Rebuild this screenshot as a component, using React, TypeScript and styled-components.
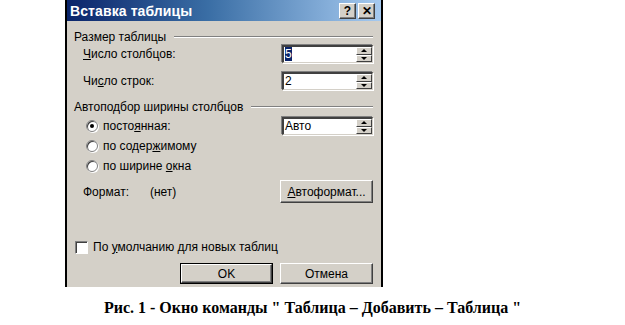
import React from "react";
import styled, { createGlobalStyle } from "styled-components";

const GlobalStyle = createGlobalStyle`
  html, body {
    margin: 0;
    padding: 0;
    background: #fff;
  }
  body {
    width: 625px;
    height: 325px;
    overflow: hidden;
  }
`;

const UI_FONT = `"Liberation Sans", Arial, sans-serif`;

const Page = styled.div`
  display: flex;
  flex-direction: column;
  width: 625px;
  height: 325px;
`;

const Dialog = styled.div`
  flex-shrink: 0;
  margin-left: 65px;
  width: 314px;
  height: 287px;
  background: #d4d0c8;
  border-left: 2px solid #000;
  border-right: 2px solid #000;
  display: flex;
  flex-direction: column;
  font-family: ${UI_FONT};
  font-size: 12px;
  color: #000;
`;

const TitleBar = styled.div`
  flex-shrink: 0;
  height: 21px;
  display: flex;
  align-items: center;
  padding: 0 6px 0 3px;
  background: linear-gradient(to right, #0a246a 0%, #3a6ea5 45%, #a6caf0 100%);
`;

const Title = styled.div`
  flex: 1;
  color: #fff;
  font-weight: bold;
  font-size: 14px;
  letter-spacing: 0.1px;
`;

const CaptionButton = styled.div`
  width: 15px;
  height: 14px;
  background: #d4d0c8;
  border-top: 1px solid #fff;
  border-left: 1px solid #fff;
  border-right: 1px solid #404040;
  border-bottom: 1px solid #404040;
  box-shadow: inset -1px -1px 0 #808080;
  display: flex;
  align-items: center;
  justify-content: center;
  font-weight: bold;
  font-size: 12px;
  line-height: 1;
  margin-left: 2px;
`;

const Body = styled.div`
  flex: 1;
  display: flex;
  flex-direction: column;
  padding: 9px 8px 0 7px;
  & > * {
    flex-shrink: 0;
  }
`;

const GroupHeader = styled.div<{ $top?: number }>`
  display: flex;
  align-items: center;
  gap: 8px;
  height: 14px;
  margin-top: ${(p) => p.$top ?? 0}px;
  &::after {
    content: "";
    flex: 1;
    height: 0;
    border-top: 1px solid #808080;
    border-bottom: 1px solid #fff;
  }
`;

const FieldRow = styled.div<{ $top: number }>`
  display: flex;
  align-items: center;
  justify-content: space-between;
  height: 18px;
  margin-top: ${(p) => p.$top}px;
`;

const Label = styled.div<{ $indent?: number }>`
  display: flex;
  align-items: center;
  padding-left: ${(p) => p.$indent ?? 9}px;
  white-space: nowrap;
`;

const Spin = styled.div`
  width: 88px;
  height: 15px;
  background: #fff;
  border-top: 2px solid #404040;
  border-left: 2px solid #404040;
  border-right: 1px solid #d4d0c8;
  border-bottom: 1px solid #d4d0c8;
  box-shadow: 1px 1px 0 #fff, -1px -1px 0 #808080;
  display: flex;
  align-items: center;
`;

const SpinValue = styled.div`
  flex: 1;
  padding-left: 1px;
  line-height: 15px;
`;

const Selected = styled.span`
  background: #0a246a;
  color: #fff;
`;

const SpinButtons = styled.div`
  width: 16px;
  height: 15px;
  display: flex;
  flex-direction: column;
`;

const SpinBtn = styled.div`
  flex: 1;
  background: #d4d0c8;
  border-top: 1px solid #fff;
  border-left: 1px solid #fff;
  border-right: 1px solid #404040;
  border-bottom: 1px solid #404040;
  display: flex;
  align-items: center;
  justify-content: center;
`;

const Arrow = styled.div<{ $up?: boolean }>`
  width: 0;
  height: 0;
  border-left: 3px solid transparent;
  border-right: 3px solid transparent;
  ${(p) =>
    p.$up ? "border-bottom: 3px solid #000;" : "border-top: 3px solid #000;"}
`;

const Radio = styled.div<{ $checked?: boolean }>`
  width: 10px;
  height: 10px;
  border-radius: 50%;
  background: #fff;
  border: 1px solid #808080;
  box-shadow: inset 1px 1px 0 #404040, 1px 1px 0 #fff;
  display: flex;
  align-items: center;
  justify-content: center;
  margin-right: 5px;
  &::after {
    content: "";
    width: 4px;
    height: 4px;
    border-radius: 50%;
    background: ${(p) => (p.$checked ? "#000" : "transparent")};
  }
`;

const Check = styled.div`
  width: 11px;
  height: 11px;
  background: #fff;
  border-top: 1px solid #808080;
  border-left: 1px solid #808080;
  border-right: 1px solid #fff;
  border-bottom: 1px solid #fff;
  box-shadow: inset 1px 1px 0 #404040;
  margin-right: 5px;
`;

const Button = styled.div<{ $default?: boolean; $h?: number }>`
  width: ${(p) => (p.$default ? 91 : 93)}px;
  height: ${(p) => (p.$h ?? 21) - (p.$default ? 2 : 0)}px;
  box-sizing: border-box;
  background: #d4d0c8;
  border-top: 1px solid #fff;
  border-left: 1px solid #fff;
  border-right: 1px solid #404040;
  border-bottom: 1px solid #404040;
  box-shadow: inset -1px -1px 0 #808080
    ${(p) => (p.$default ? ", 0 0 0 1px #000" : "")};
  display: flex;
  align-items: center;
  justify-content: center;
  margin-top: ${(p) => (p.$default ? 1 : 0)}px;
`;

const FormatRow = styled.div`
  display: flex;
  align-items: center;
  height: 23px;
  margin-top: 5px;
`;

const FormatValue = styled.div`
  flex: 1;
  padding-left: 21px;
`;

const Footer = styled.div`
  display: flex;
  justify-content: flex-end;
  align-items: flex-start;
  gap: 8px;
  margin-top: 7px;
`;

const Caption = styled.div`
  flex-shrink: 0;
  margin-top: 12px;
  text-align: center;
  font-family: "Liberation Serif", "Times New Roman", serif;
  font-weight: bold;
  font-size: 16px;
  line-height: 18px;
  color: #000;
`;

const U = styled.span`
  text-decoration: underline;
`;

const Spinner = ({ children }: { children: React.ReactNode }) => (
  <Spin>
    <SpinValue>{children}</SpinValue>
    <SpinButtons>
      <SpinBtn>
        <Arrow $up />
      </SpinBtn>
      <SpinBtn>
        <Arrow />
      </SpinBtn>
    </SpinButtons>
  </Spin>
);

export default function App() {
  return (
    <Page>
      <GlobalStyle />
      <Dialog>
        <TitleBar>
          <Title>Вставка таблицы</Title>
          <CaptionButton>?</CaptionButton>
          <CaptionButton>✕</CaptionButton>
        </TitleBar>
        <Body>
          <GroupHeader>Размер таблицы</GroupHeader>
          <FieldRow $top={1}>
            <Label>
              <span>
                <U>Ч</U>исло столбцов:
              </span>
            </Label>
            <Spinner>
              <Selected>5</Selected>
            </Spinner>
          </FieldRow>
          <FieldRow $top={9}>
            <Label>
              <span>
                Чи<U>с</U>ло строк:
              </span>
            </Label>
            <Spinner>2</Spinner>
          </FieldRow>
          <GroupHeader $top={10}>Автоподбор ширины столбцов</GroupHeader>
          <FieldRow $top={3}>
            <Label $indent={12}>
              <Radio $checked />
              <span>
                посто<U>я</U>нная:
              </span>
            </Label>
            <Spinner>Авто</Spinner>
          </FieldRow>
          <FieldRow $top={2}>
            <Label $indent={12}>
              <Radio />
              <span>
                по содер<U>ж</U>имому
              </span>
            </Label>
          </FieldRow>
          <FieldRow $top={2}>
            <Label $indent={12}>
              <Radio />
              <span>
                по ширине <U>о</U>кна
              </span>
            </Label>
          </FieldRow>
          <FormatRow>
            <Label>Формат:</Label>
            <FormatValue>(нет)</FormatValue>
            <Button $h={23}>
              <span>
                <U>А</U>втоформат...
              </span>
            </Button>
          </FormatRow>
          <FieldRow $top={35}>
            <Label $indent={1}>
              <Check />
              <span>
                По <U>у</U>молчанию для новых таблиц
              </span>
            </Label>
          </FieldRow>
          <Footer>
            <Button $default>OK</Button>
            <Button>Отмена</Button>
          </Footer>
        </Body>
      </Dialog>
      <Caption>
        Рис. 1 - Окно команды " Таблица – Добавить – Таблица "
      </Caption>
    </Page>
  );
}
